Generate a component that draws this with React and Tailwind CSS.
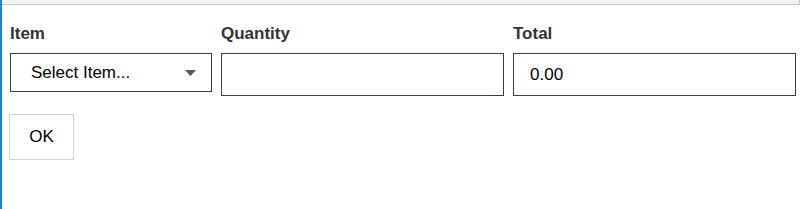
import { useState } from 'react';

export default function App() {
  const [quantity, setQuantity] = useState('');

  return (
    <div className="w-[802px] h-[209px] bg-white border-l-2 border-[#1985de] font-['Liberation_Sans',Arial,sans-serif] overflow-hidden">
      {/* top strip */}
      <div className="h-[5px] mr-[2px] bg-[#f1f1f1] border-b border-r border-[#c6c6c6]"></div>

      <div className="pl-2 pt-5">
        {/* Fields row */}
        <div className="flex gap-[9px]">
          <div className="w-[202px] flex flex-col">
            <label className="text-[17px] leading-[18px] font-bold text-[#333]">Item</label>
            <button className="mt-[10px] h-[39px] border border-[#3b4040] flex items-center justify-between pl-[20px] pr-[15px] text-[17px] text-black">
              <span>Select Item...</span>
              <svg width="11" height="6" viewBox="0 0 11 6">
                <path d="M0 0 H11 L5.5 6 Z" fill="#555" />
              </svg>
            </button>
          </div>

          <div className="w-[283px] flex flex-col">
            <label className="text-[17px] leading-[18px] font-bold text-[#333]">Quantity</label>
            <input
              value={quantity}
              onChange={(e) => setQuantity(e.target.value)}
              className="mt-[10px] h-[43px] border border-[#3b4040] px-4 text-[17px] text-black outline-none"
            />
          </div>

          <div className="w-[283px] flex flex-col">
            <label className="text-[17px] leading-[18px] font-bold text-[#333]">Total</label>
            <div className="mt-[10px] h-[43px] border border-[#3b4040] pl-4 flex items-center text-[17px] text-black">
              0.00
            </div>
          </div>
        </div>

        {/* OK button */}
        <button className="-ml-px mt-[18px] w-[65px] h-[46px] border border-[#cdd1d1] text-[17px] text-black">
          OK
        </button>
      </div>
    </div>
  );
}
